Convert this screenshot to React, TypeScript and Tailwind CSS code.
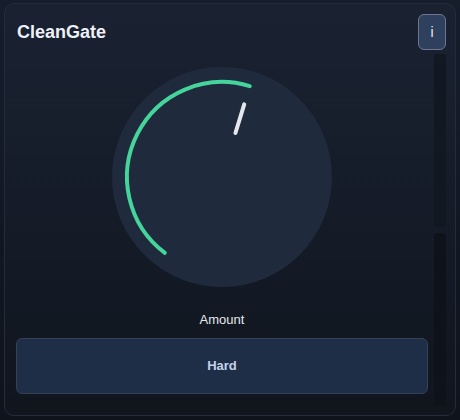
import React from "react";

function Knob() {
  const c = 110;
  const pt = (r: number, deg: number) => {
    const a = (deg * Math.PI) / 180;
    return [c + r * Math.sin(a), c - r * Math.cos(a)];
  };
  const [sx, sy] = pt(95, -143);
  const [ex, ey] = pt(95, 17);
  const [l1x, l1y] = pt(46, 17);
  const [l2x, l2y] = pt(76, 17);
  return (
    <svg width="220" height="220" viewBox="0 0 220 220">
      <circle cx="110" cy="110" r="110" fill="#1f2a3c" />
      <path
        d={`M ${sx} ${sy} A 95 95 0 0 1 ${ex} ${ey}`}
        fill="none"
        stroke="#45d49b"
        strokeWidth="4"
        strokeLinecap="round"
      />
      <line x1={l1x} y1={l1y} x2={l2x} y2={l2y} stroke="#e5e7eb" strokeWidth="4" strokeLinecap="round" />
    </svg>
  );
}

export default function App() {
  return (
    <div
      className="w-[460px] h-[420px] overflow-hidden bg-gradient-to-b from-[#161d2b] to-[#0e131c] pt-[3px] pl-[4px]"
      style={{ fontFamily: '"Liberation Sans", Arial, sans-serif' }}
    >
      <div className="w-[452px] h-[413px] rounded-[10px] border border-[#232c3c] bg-gradient-to-b from-[#1a2232] to-[#10151e] pt-[10px] pl-[11px] pr-[9px] pb-[9px] flex flex-col">
        <div className="flex items-center justify-between h-[36px]">
          <div className="ml-[1px] text-[18px] font-bold text-[#eef1f8] leading-none">CleanGate</div>
          <div className="w-[28px] h-[36px] rounded-[6px] border border-[#6b788c] bg-[#2e405e] flex items-center justify-center text-[14px] text-[#e8ebf2]">
            i
          </div>
        </div>
        <div className="flex flex-row gap-[6px] mt-[4px] flex-1">
          <div className="flex-1 flex flex-col items-center">
            <div className="mt-[13px]">
              <Knob />
            </div>
            <div className="mt-[25px] text-[13px] leading-[16px] text-[#e5e7eb]">Amount</div>
            <div className="mt-[10px] w-full h-[56px] rounded-[6px] border border-[#344157] bg-[#1f2e47] flex items-center justify-center text-[13px] font-bold text-[#c3d0ea]">
              Hard
            </div>
          </div>
          <div className="w-[12px] flex flex-col gap-[6px]">
            <div className="flex-1 rounded-[3px] bg-[#121821]" />
            <div className="flex-1 rounded-[3px] bg-[#0e131b]" />
          </div>
        </div>
      </div>
    </div>
  );
}
